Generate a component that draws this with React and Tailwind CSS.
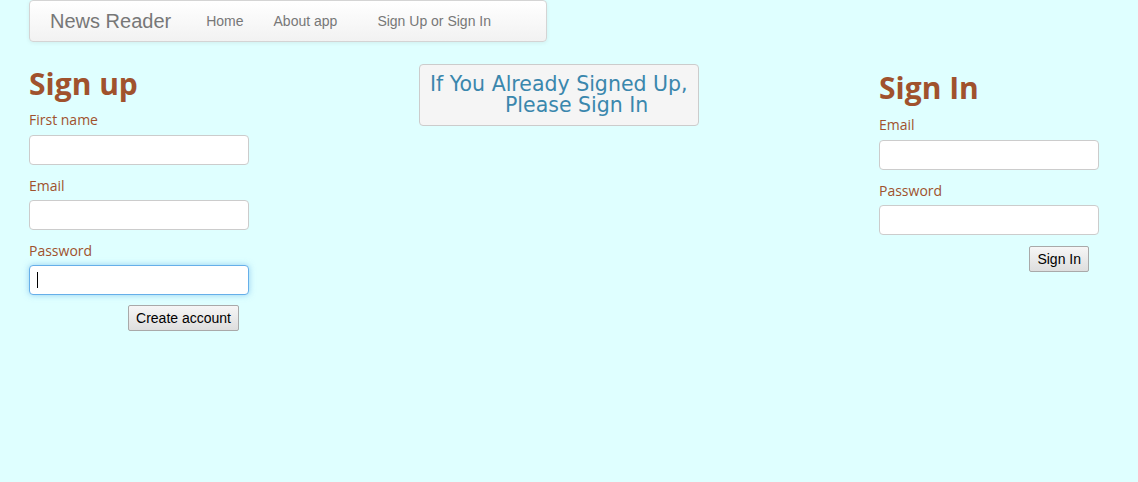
export default function App() {
    const comic = { fontFamily: '"Open Sans", "Noto Sans", sans-serif' };

    return (
        <div className="min-h-[482px] w-full bg-[#dfffff] pl-[29px]" style={{ fontFamily: '"Liberation Sans", Arial, sans-serif' }}>
            <nav className="flex h-[42px] w-[518px] items-center rounded border border-[#d4d4d4] bg-gradient-to-b from-white to-[#f2f2f2] shadow-[0_1px_4px_rgba(0,0,0,0.065)]">
                <span className="ml-[20px] text-[20px] text-[#777]">News Reader</span>
                <span className="ml-[35px] text-[14px] text-[#777]">Home</span>
                <span className="ml-[30px] text-[14px] text-[#777]">About app</span>
                <span className="ml-[40px] text-[14px] text-[#777]">Sign Up or Sign In</span>
            </nav>

            <div className="flex">
                <div className="w-[390px] pt-[22px]" style={comic}>
                    <h2 className="text-[30px] font-bold leading-[40px] text-[#a0522d]">Sign up</h2>
                    <label className="mt-[6px] block text-[14px] leading-[20px] text-[#a0522d]">First name</label>
                    <input className="mt-[5px] block h-[30px] w-[220px] rounded border border-[#ccc] bg-white" />
                    <label className="mt-[11px] block text-[14px] leading-[20px] text-[#a0522d]">Email</label>
                    <input className="mt-[4px] block h-[30px] w-[220px] rounded border border-[#ccc] bg-white" />
                    <label className="mt-[11px] block text-[14px] leading-[20px] text-[#a0522d]">Password</label>
                    <div className="mt-[4px] flex h-[30px] w-[220px] items-center rounded border border-[#66afe9] bg-white pl-[7px] shadow-[0_0_6px_rgba(102,175,233,0.6)]">
                        <span className="h-[16px] w-px bg-black" />
                    </div>
                    <div className="flex w-[210px] justify-end">
                        <button className="mt-[10px] h-[26px] rounded-[2px] border border-[#a9a9a9] bg-gradient-to-b from-[#f6f6f6] to-[#dedede] px-[7px] text-[14px] text-black" style={{ fontFamily: '"Liberation Sans", Arial, sans-serif' }}>
                            Create account
                        </button>
                    </div>
                </div>

                <div className="w-[460px] pt-[22px]">
                    <div className="h-[62px] w-[280px] rounded border border-[#ccc] bg-[#f5f5f5] pt-[9px] text-[20.5px] leading-[21px] text-[#3a87ad]" style={{ fontFamily: '"DejaVu Sans", Verdana, sans-serif' }}>
                        <div className="pl-[10px] whitespace-nowrap">If You Already Signed Up,</div>
                        <div className="pl-[85px] whitespace-nowrap">Please Sign In</div>
                    </div>
                </div>

                <div className="flex-1 pt-[26px]" style={comic}>
                    <h2 className="text-[30px] font-bold leading-[40px] text-[#a0522d]">Sign In</h2>
                    <label className="mt-[7px] block text-[14px] leading-[20px] text-[#a0522d]">Email</label>
                    <input className="mt-[5px] block h-[30px] w-[220px] rounded border border-[#ccc] bg-white" />
                    <label className="mt-[11px] block text-[14px] leading-[20px] text-[#a0522d]">Password</label>
                    <input className="mt-[4px] block h-[30px] w-[220px] rounded border border-[#ccc] bg-white" />
                    <div className="flex w-[210px] justify-end">
                        <button className="mt-[11px] h-[26px] rounded-[2px] border border-[#a9a9a9] bg-gradient-to-b from-[#f6f6f6] to-[#dedede] px-[7px] text-[14px] text-black" style={{ fontFamily: '"Liberation Sans", Arial, sans-serif' }}>
                            Sign In
                        </button>
                    </div>
                </div>
            </div>
        </div>
    );
}
